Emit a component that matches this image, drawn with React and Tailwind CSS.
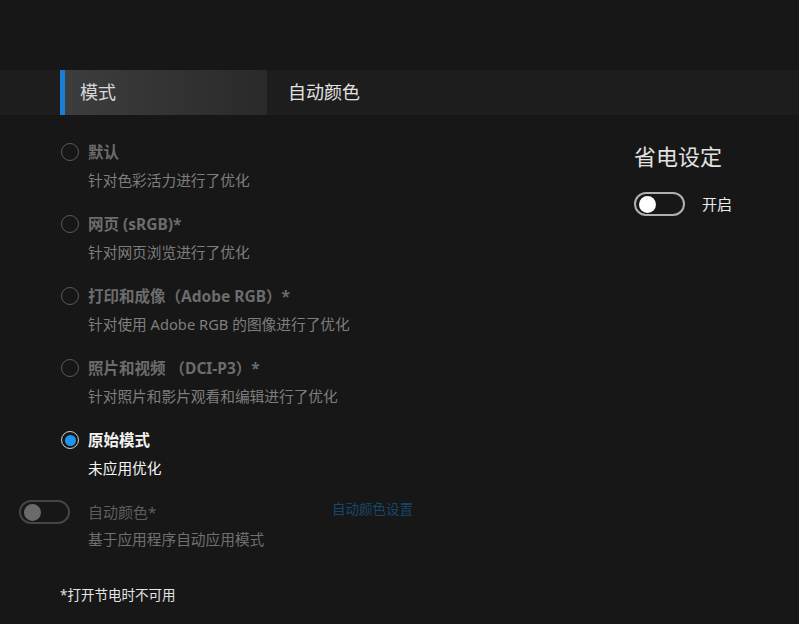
import React, { useState } from "react";

const modes = [
	{ title: "默认", desc: "针对色彩活力进行了优化" },
	{ title: "网页 (sRGB)*", desc: "针对网页浏览进行了优化" },
	{ title: "打印和成像（Adobe RGB）*", desc: "针对使用 Adobe RGB 的图像进行了优化" },
	{ title: "照片和视频 （DCI-P3）*", desc: "针对照片和影片观看和编辑进行了优化" },
	{ title: "原始模式", desc: "未应用优化" },
];

function Radio({ checked }) {
	return (
		<span
			className={
				"flex h-[18px] w-[18px] items-center justify-center rounded-full border-[1.5px] " +
				(checked ? "border-[#d0d0d0]" : "border-[#5a5a5a]")
			}
		>
			{checked && <span className="h-[11px] w-[11px] rounded-full bg-[#1e96f0]" />}
		</span>
	);
}

function Toggle({ disabled }) {
	return (
		<span
			className={
				"flex h-[24px] w-[51px] items-center rounded-full border-2 px-[3px] " +
				(disabled ? "border-[#454545]" : "border-[#b0b0b0]")
			}
		>
			<span
				className={
					"h-[17px] w-[17px] rounded-full " + (disabled ? "bg-[#6a6a6a]" : "bg-white")
				}
			/>
		</span>
	);
}

export default function App() {
	const [selected, setSelected] = useState(4);

	return (
		<div
			className="h-[624px] w-[799px] overflow-hidden bg-[#171717]"
			style={{ fontFamily: '"Noto Sans", "Noto Sans CJK SC", sans-serif' }}
		>
			<div className="h-[70px]" />
			<div className="flex h-[45px] bg-[#1d1d1d]">
				<div className="w-[60px]" />
				<div className="flex w-[207px] items-center border-l-[5px] border-[#1a7fd4] bg-gradient-to-r from-[#3d3d3d] to-[#2a2a2a] pl-[15px] text-[18px] text-[#d8d8d8]">
					模式
				</div>
				<div className="flex items-center pl-[21px] text-[18px] text-[#e2e2e2]">自动颜色</div>
			</div>

			<div className="flex">
				<div className="w-[600px] pl-[19px] pt-[26px]">
					{modes.map((m, i) => {
						const active = selected === i;
						return (
							<div key={i} className="mb-[22px] flex" onClick={() => setSelected(i)}>
								<div className="ml-[42px] mr-[9px] flex h-[22px] items-center">
									<Radio checked={active} />
								</div>
								<div className="flex flex-col">
									<span
										className={
											"h-[22px] text-[15.5px] font-bold leading-[22px] " +
											(active ? "text-[#f2f2f2]" : "text-[#6c6c6c]")
										}
									>
										{m.title}
									</span>
									<span
										className={
											"mt-[6px] h-[22px] text-[14.7px] leading-[22px] " +
											(active ? "text-[#f5f5f5]" : "text-[#7e7e7e]")
										}
									>
										{m.desc}
									</span>
								</div>
							</div>
						);
					})}

					<div className="flex">
						<div className="mr-[18px] flex h-[22px] items-center">
							<Toggle disabled />
						</div>
						<div className="flex flex-col">
							<div className="flex h-[22px] items-center">
								<span className="w-[244px] text-[15px] leading-[22px] text-[#5e5e5e]">自动颜色*</span>
								<span className="-mt-[6px] text-[13.5px] text-[#17476a]">自动颜色设置</span>
							</div>
							<span className="mt-[5px] h-[22px] text-[14.7px] leading-[22px] text-[#707070]">
								基于应用程序自动应用模式
							</span>
						</div>
					</div>

					<div className="ml-[41px] mt-[34px] text-[13.5px] leading-[22px] text-[#e4e4e4]">*打开节电时不可用</div>
				</div>

				<div className="pl-[34px] pt-[26px]">
					<div className="text-[22px] leading-[30px] text-[#e2e2e2]">省电设定</div>
					<div className="mt-[21px] flex items-center">
						<Toggle />
						<span className="ml-[17px] text-[15px] text-[#ececec]">开启</span>
					</div>
				</div>
			</div>
		</div>
	);
}
